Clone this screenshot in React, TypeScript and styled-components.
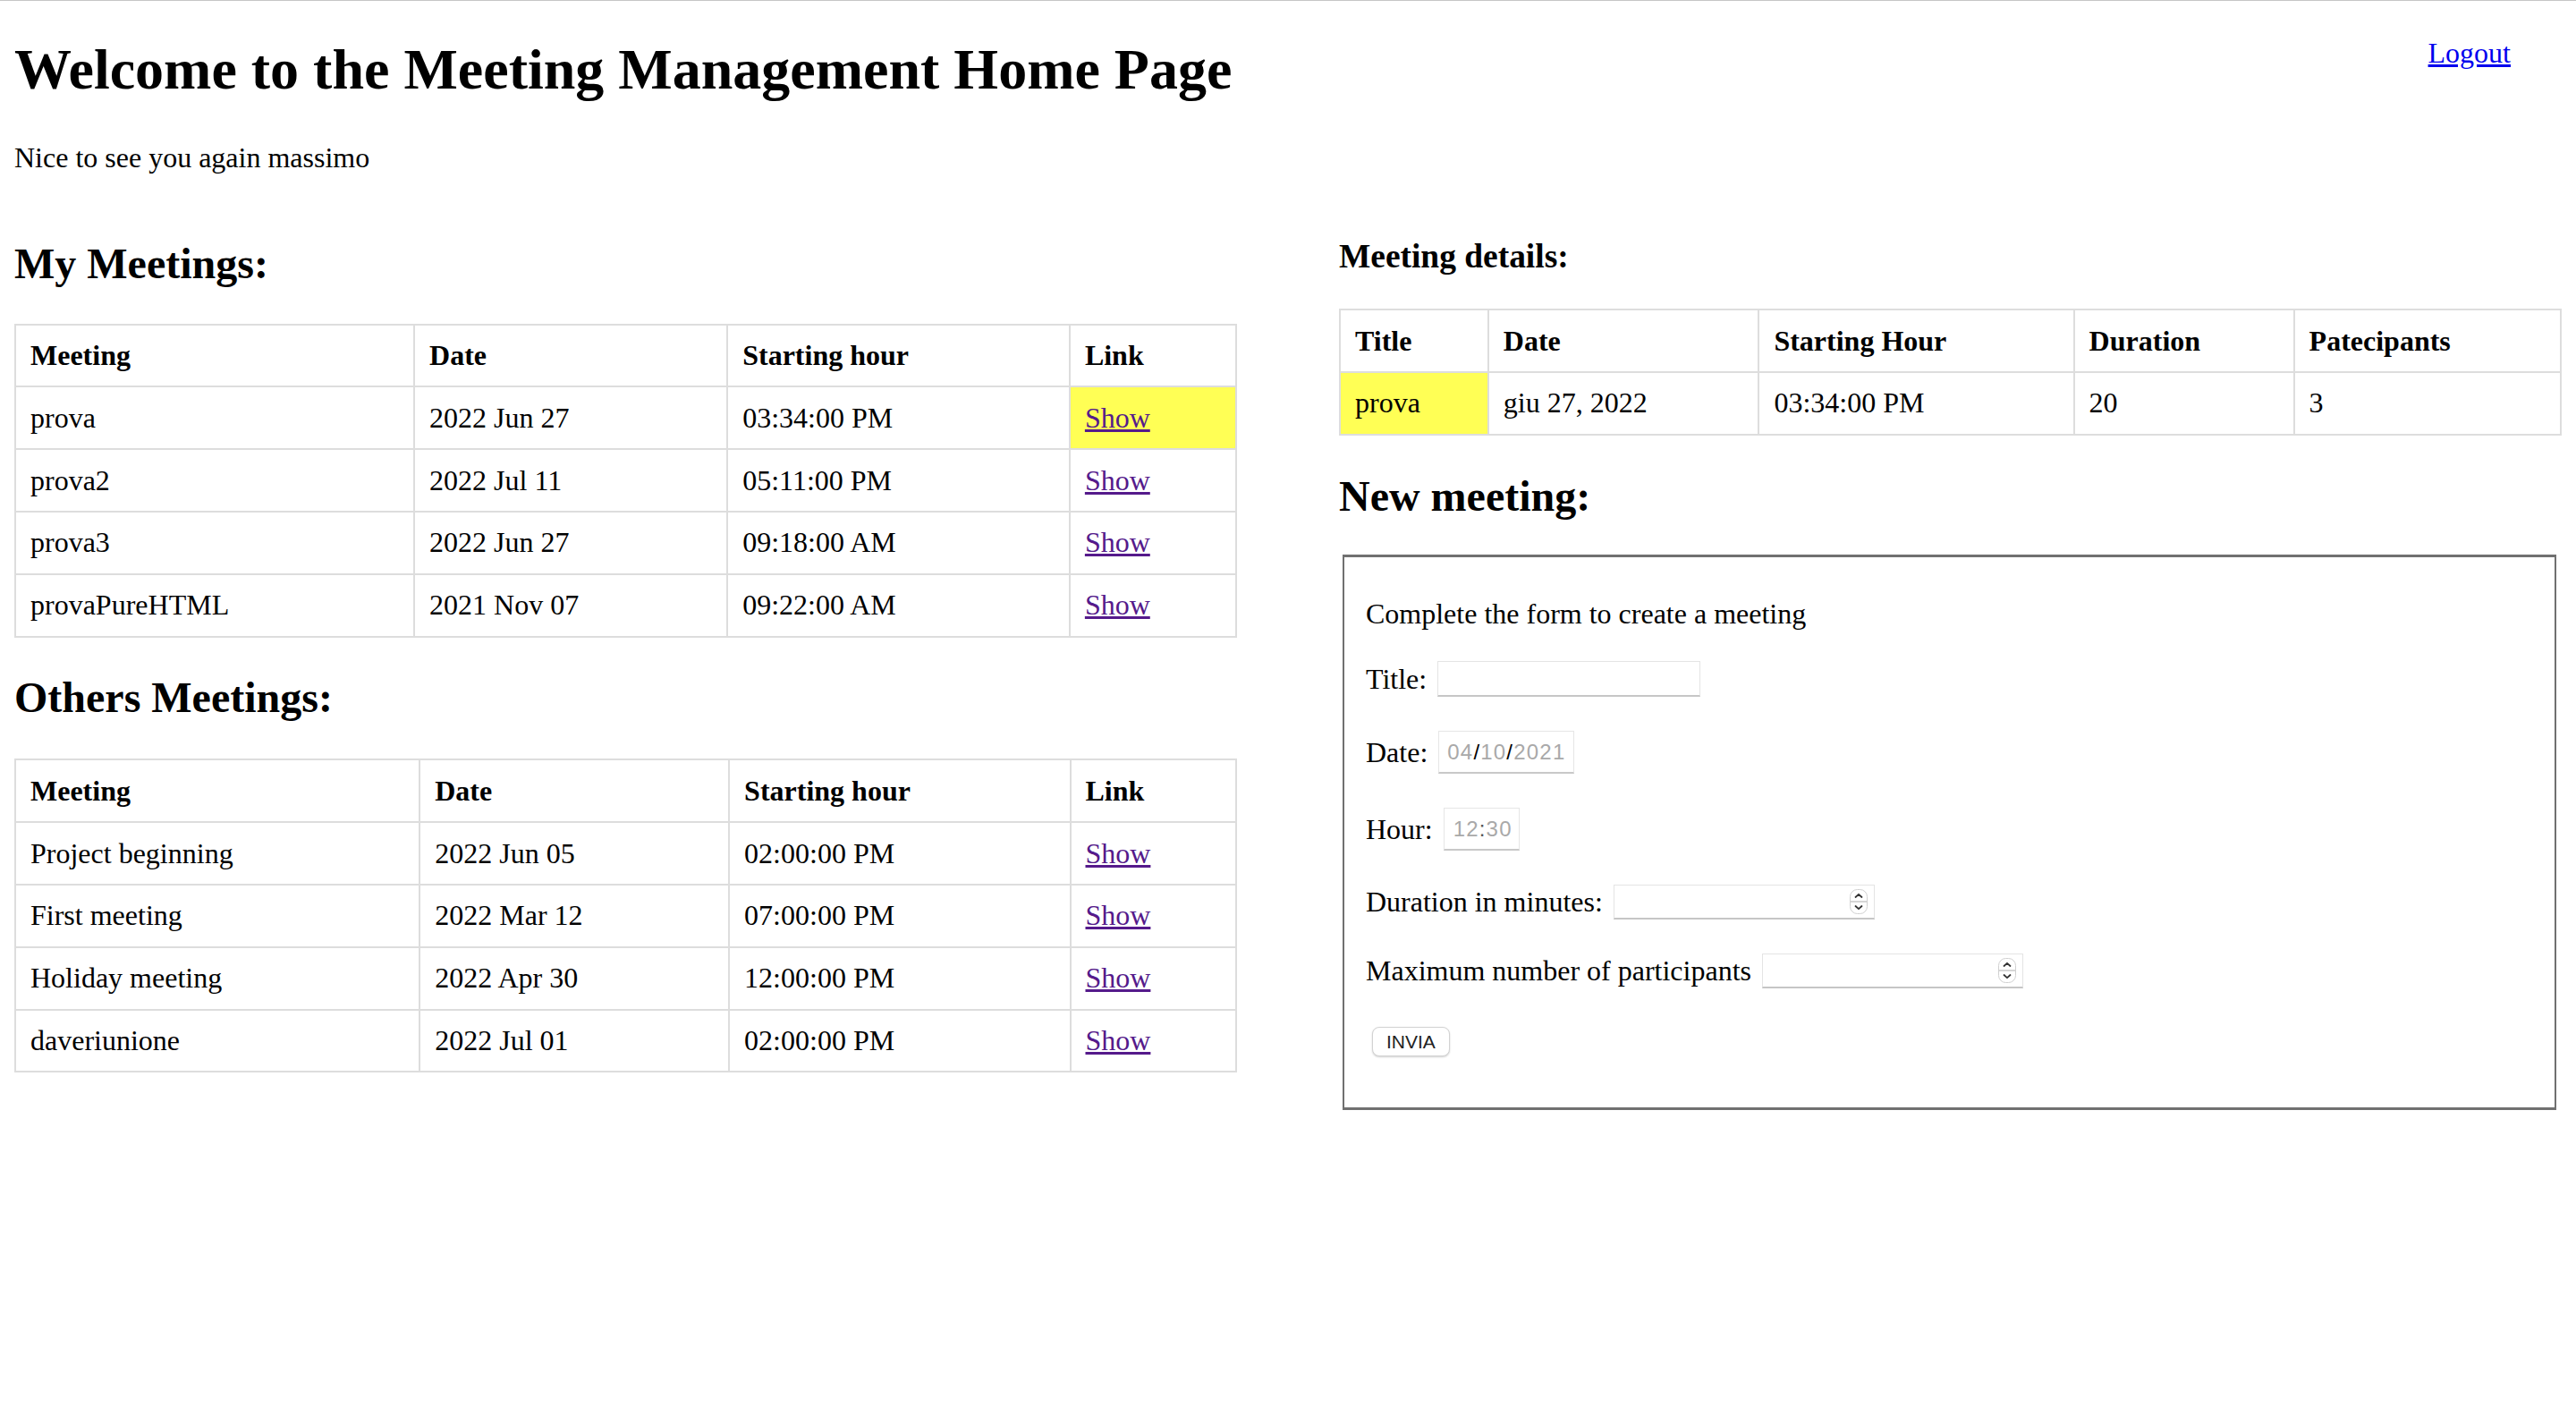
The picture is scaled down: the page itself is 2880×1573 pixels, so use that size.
import React from 'react';
import styled, { createGlobalStyle } from 'styled-components';

const GlobalStyle = createGlobalStyle`
  html, body {
    margin: 0;
    padding: 0;
    background: #ffffff;
  }
  body {
    font-family: "Liberation Serif", "Times New Roman", serif;
    font-size: 32px;
    color: #000000;
  }
`;

const Page = styled.div`
  border-top: 1px solid #c6c6c6;
  padding: 0 16px;
`;

const Header = styled.header`
  display: flex;
  justify-content: space-between;
  align-items: flex-start;
`;

const PageTitle = styled.h1`
  font-size: 64px;
  font-weight: bold;
  margin: 40px 0 43px;
`;

const LogoutLink = styled.a`
  margin: 40px 57px 0 0;
  color: #0000ee;
  text-decoration: underline;
`;

const Greeting = styled.p`
  margin: 0 0 32px;
`;

const Columns = styled.div`
  display: flex;
  justify-content: space-between;
  align-items: flex-start;
`;

const Column = styled.section`
  width: 48%;
  display: flow-root;
`;

const SectionTitle = styled.h2<{ $after?: number }>`
  font-size: 48px;
  font-weight: bold;
  margin: 39.84px 0 ${(p) => p.$after ?? 39.84}px;
`;

const SubTitle = styled.h3`
  font-size: 37.44px;
  font-weight: bold;
  margin: 37.8px 0 37.44px;
`;

const Table = styled.table`
  width: 100%;
  border-collapse: collapse;
`;

const HeadCell = styled.th`
  text-align: left;
  font-weight: bold;
  border: 2px solid #dddddd;
  padding: 15.4px 16px;
`;

const Cell = styled.td<{ $highlight?: boolean }>`
  border: 2px solid #dddddd;
  padding: 15.4px 16px;
  background: ${(p) => (p.$highlight ? '#ffff55' : 'transparent')};
`;

const ShowLink = styled.a`
  color: #551a8b;
  text-decoration: underline;
`;

const FormBox = styled.form`
  margin: 0 6px 0 4px;
  border: 2px solid #707070;
  border-top-width: 3px;
  border-bottom-width: 3px;
  padding: 10px 24px 57px;
`;

const Intro = styled.p`
  margin: 35px 0 34px;
`;

const Fields = styled.div`
  display: flex;
  flex-direction: column;
  align-items: flex-start;
  gap: 38px;
`;

const FieldRow = styled.div`
  display: flex;
  align-items: center;
  gap: 12px;
`;

const TextInput = styled.input`
  box-sizing: border-box;
  width: 294px;
  height: 40px;
  border: 1px solid #e4e4e4;
  border-bottom: 2px solid #c6c6c6;
  border-radius: 0;
  padding: 0 8px;
  font: 24px "Liberation Sans", Arial, sans-serif;
  background: #ffffff;
  outline: none;
`;

const PickerBox = styled.div<{ $width: number; $left: number }>`
  box-sizing: border-box;
  width: ${(p) => p.$width}px;
  height: 48px;
  display: flex;
  align-items: center;
  padding-left: ${(p) => p.$left}px;
  border: 1px solid #e6e6e6;
  border-bottom: 2px solid #c8c8c8;
  font-family: "Liberation Sans", Arial, sans-serif;
  font-size: 24px;
  letter-spacing: 1.2px;
  color: #a9a9a9;
`;

const Separator = styled.span<{ $color: string }>`
  color: ${(p) => p.$color};
`;

const NumberBox = styled.div`
  box-sizing: border-box;
  width: 292px;
  height: 39px;
  display: flex;
  align-items: center;
  padding-right: 7px;
  border: 1px solid #e4e4e4;
  border-bottom: 2px solid #c6c6c6;
  background: #ffffff;
`;

const NumberInput = styled.input`
  flex: 1;
  min-width: 0;
  height: 100%;
  border: none;
  outline: none;
  background: transparent;
  padding: 0 8px;
  font: 24px "Liberation Sans", Arial, sans-serif;
`;

const SubmitButton = styled.button`
  box-sizing: border-box;
  margin: 5px 0 0 7px;
  width: 87px;
  height: 33px;
  border: 1px solid #d2d2d2;
  border-radius: 8px;
  background: #ffffff;
  box-shadow: 0 1px 2px rgba(0, 0, 0, 0.18);
  font-family: "Liberation Sans", Arial, sans-serif;
  font-size: 21px;
  color: #222222;
  padding: 0;
`;

const Spinner = () => (
  <svg width="20" height="28" viewBox="0 0 20 28">
    <rect x="0.5" y="0.5" width="19" height="27" rx="8" fill="#ffffff" stroke="#d0d0d0" />
    <line x1="1" y1="14" x2="19" y2="14" stroke="#d6d6d6" strokeWidth="2" />
    <path d="M6.5 9 L10 5.8 L13.5 9" stroke="#333" strokeWidth="1.8" fill="none" strokeLinecap="round" strokeLinejoin="round" />
    <path d="M6.5 19 L10 22.2 L13.5 19" stroke="#333" strokeWidth="1.8" fill="none" strokeLinecap="round" strokeLinejoin="round" />
  </svg>
);

type Meeting = { title: string; date: string; hour: string; highlight?: boolean };

const myMeetings: Meeting[] = [
  { title: 'prova', date: '2022 Jun 27', hour: '03:34:00 PM', highlight: true },
  { title: 'prova2', date: '2022 Jul 11', hour: '05:11:00 PM' },
  { title: 'prova3', date: '2022 Jun 27', hour: '09:18:00 AM' },
  { title: 'provaPureHTML', date: '2021 Nov 07', hour: '09:22:00 AM' },
];

const othersMeetings: Meeting[] = [
  { title: 'Project beginning', date: '2022 Jun 05', hour: '02:00:00 PM' },
  { title: 'First meeting', date: '2022 Mar 12', hour: '07:00:00 PM' },
  { title: 'Holiday meeting', date: '2022 Apr 30', hour: '12:00:00 PM' },
  { title: 'daveriunione', date: '2022 Jul 01', hour: '02:00:00 PM' },
];

const MeetingTable = ({ rows }: { rows: Meeting[] }) => (
  <Table>
    <thead>
      <tr>
        <HeadCell>Meeting</HeadCell>
        <HeadCell>Date</HeadCell>
        <HeadCell>Starting hour</HeadCell>
        <HeadCell>Link</HeadCell>
      </tr>
    </thead>
    <tbody>
      {rows.map((m) => (
        <tr key={m.title}>
          <Cell>{m.title}</Cell>
          <Cell>{m.date}</Cell>
          <Cell>{m.hour}</Cell>
          <Cell $highlight={m.highlight}>
            <ShowLink href="#">Show</ShowLink>
          </Cell>
        </tr>
      ))}
    </tbody>
  </Table>
);

export default function App() {
  return (
    <>
      <GlobalStyle />
      <Page>
        <Header>
          <PageTitle>Welcome to the Meeting Management Home Page</PageTitle>
          <LogoutLink href="#">Logout</LogoutLink>
        </Header>
        <Greeting>Nice to see you again massimo</Greeting>
        <Columns>
          <Column>
            <SectionTitle>My Meetings:</SectionTitle>
            <MeetingTable rows={myMeetings} />
            <SectionTitle $after={41}>Others Meetings:</SectionTitle>
            <MeetingTable rows={othersMeetings} />
          </Column>
          <Column>
            <SubTitle>Meeting details:</SubTitle>
            <Table>
              <thead>
                <tr>
                  <HeadCell>Title</HeadCell>
                  <HeadCell>Date</HeadCell>
                  <HeadCell>Starting Hour</HeadCell>
                  <HeadCell>Duration</HeadCell>
                  <HeadCell>Patecipants</HeadCell>
                </tr>
              </thead>
              <tbody>
                <tr>
                  <Cell $highlight>prova</Cell>
                  <Cell>giu 27, 2022</Cell>
                  <Cell>03:34:00 PM</Cell>
                  <Cell>20</Cell>
                  <Cell>3</Cell>
                </tr>
              </tbody>
            </Table>
            <SectionTitle $after={38.5}>New meeting:</SectionTitle>
            <FormBox onSubmit={(e) => e.preventDefault()}>
              <Intro>Complete the form to create a meeting</Intro>
              <Fields>
                <FieldRow>
                  <span>Title:</span>
                  <TextInput type="text" />
                </FieldRow>
                <FieldRow>
                  <span>Date:</span>
                  <PickerBox $width={152} $left={9}>
                    04<Separator $color="#000">/</Separator>10<Separator $color="#000">/</Separator>2021
                  </PickerBox>
                </FieldRow>
                <FieldRow>
                  <span>Hour:</span>
                  <PickerBox $width={85} $left={10}>
                    12<Separator $color="#555">:</Separator>30
                  </PickerBox>
                </FieldRow>
                <FieldRow>
                  <span>Duration in minutes:</span>
                  <NumberBox>
                    <NumberInput type="text" inputMode="numeric" />
                    <Spinner />
                  </NumberBox>
                </FieldRow>
                <FieldRow>
                  <span>Maximum number of participants</span>
                  <NumberBox>
                    <NumberInput type="text" inputMode="numeric" />
                    <Spinner />
                  </NumberBox>
                </FieldRow>
                <SubmitButton type="submit">INVIA</SubmitButton>
              </Fields>
            </FormBox>
          </Column>
        </Columns>
      </Page>
    </>
  );
}
